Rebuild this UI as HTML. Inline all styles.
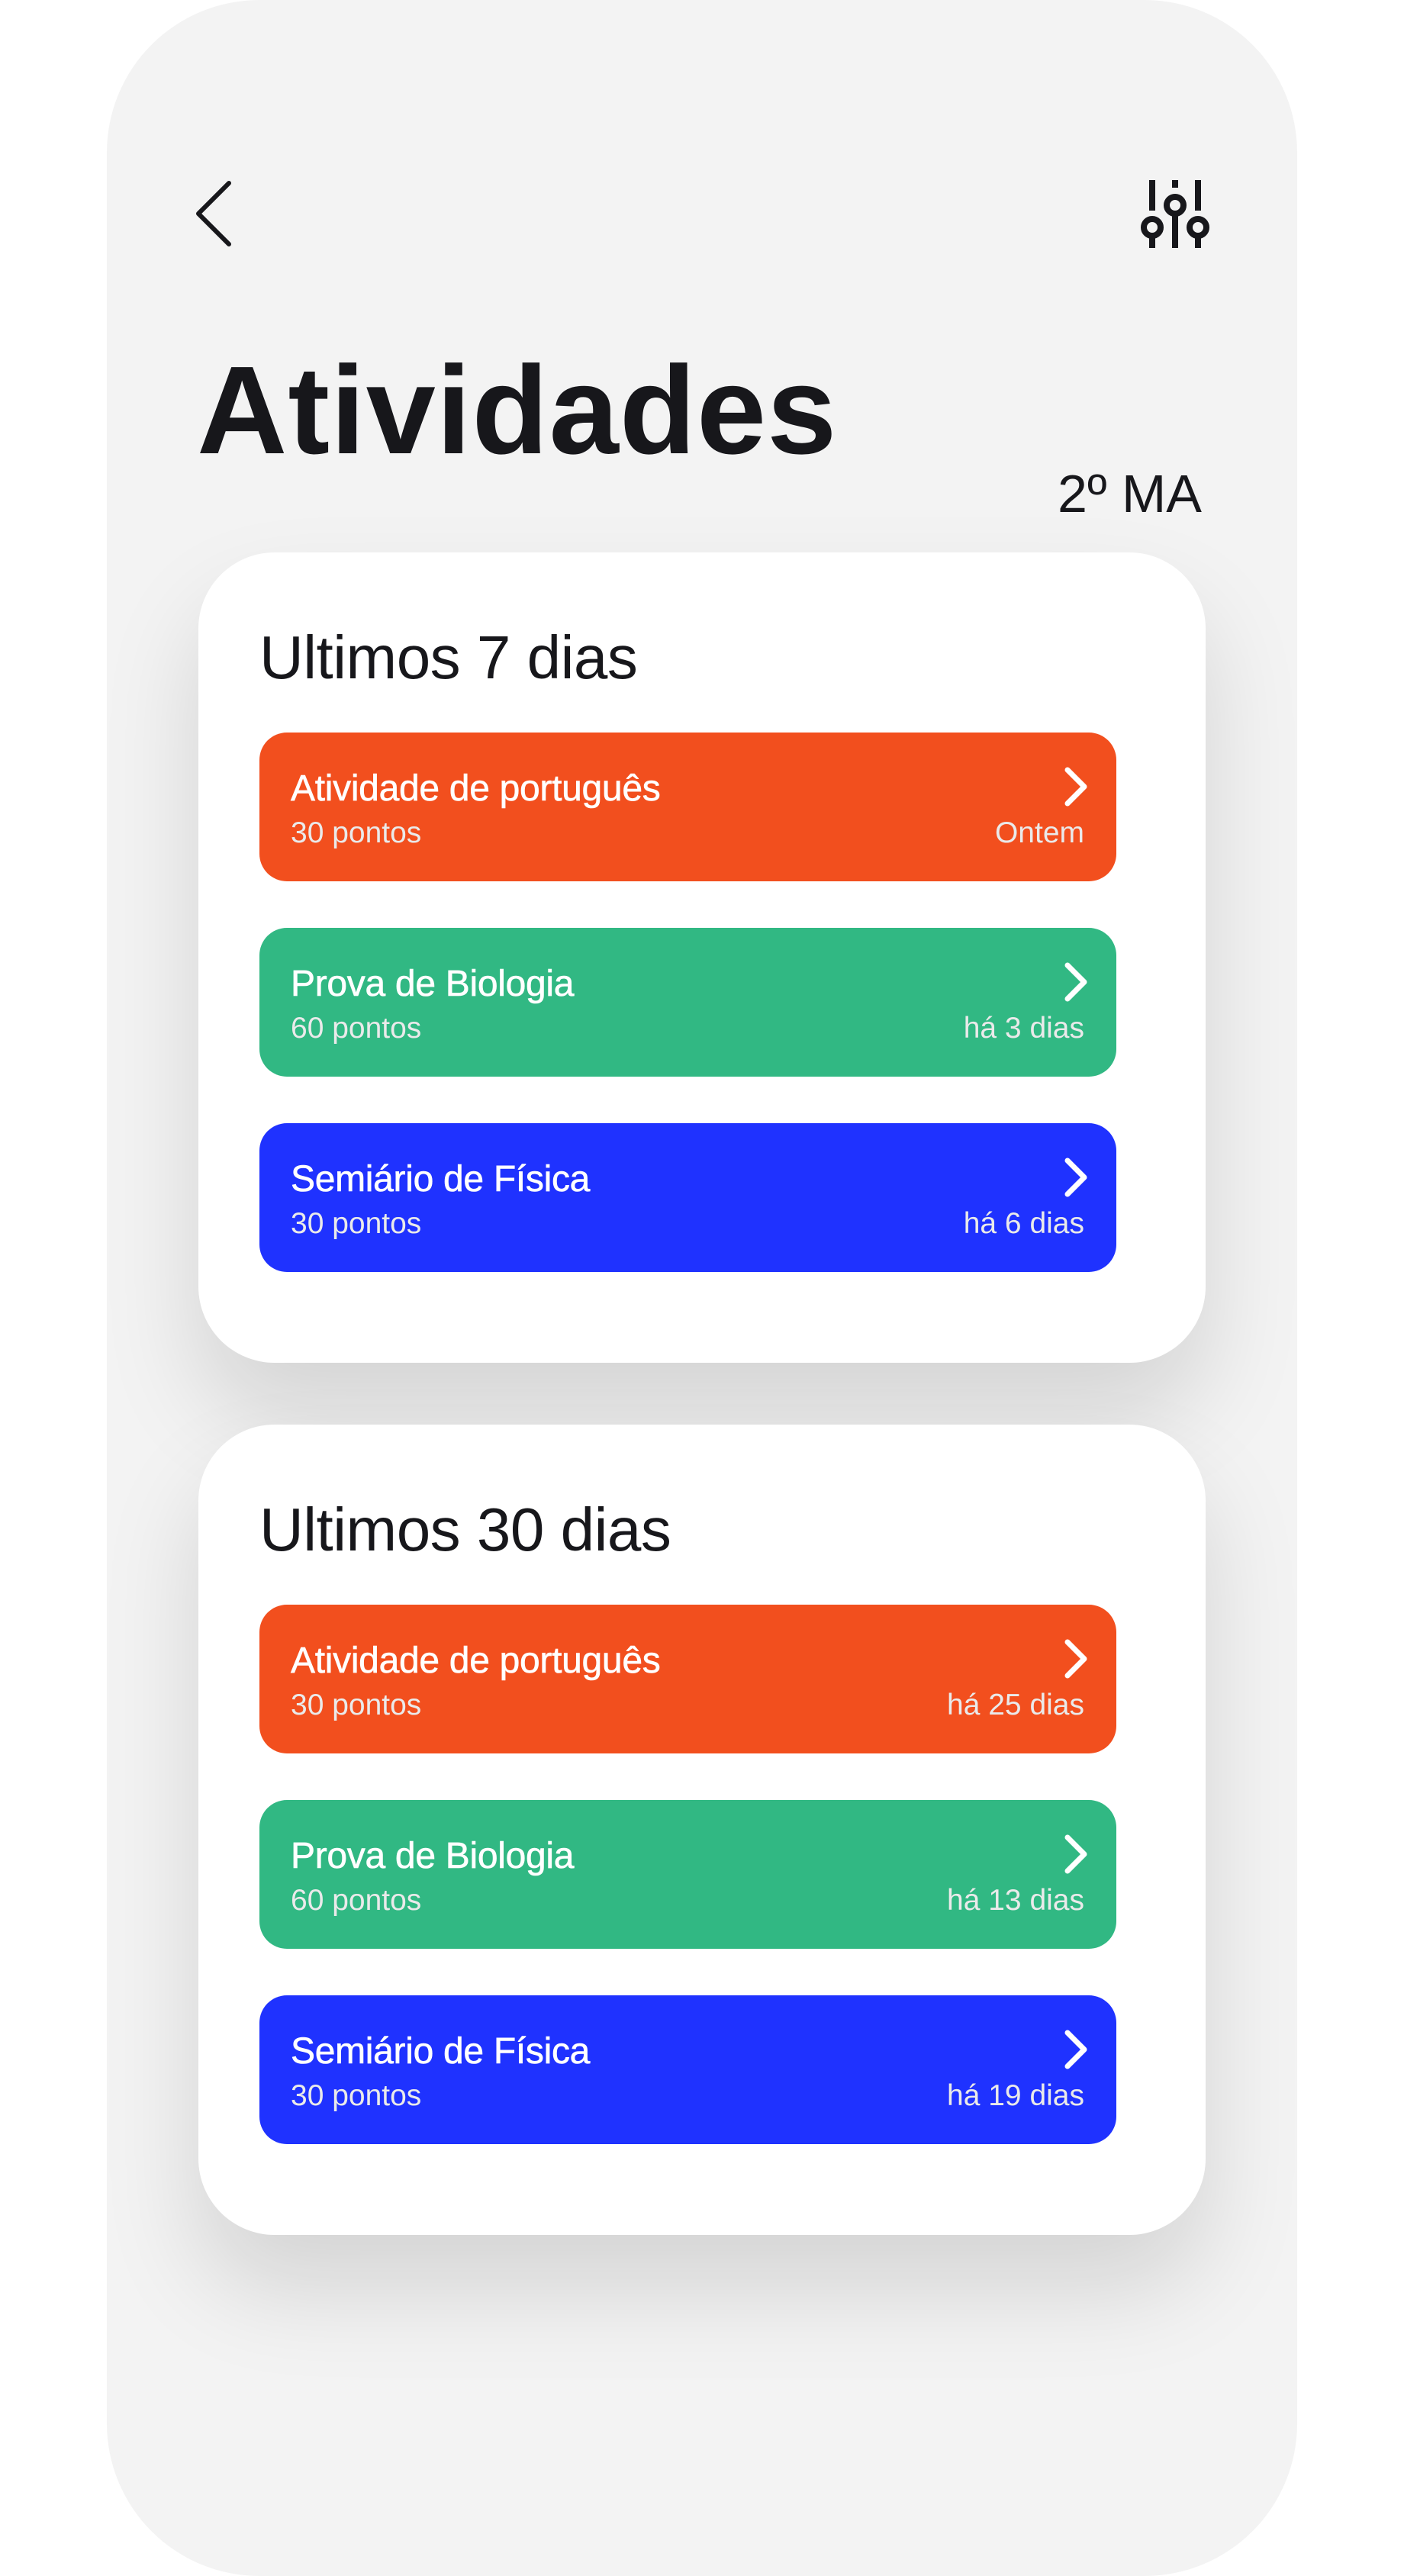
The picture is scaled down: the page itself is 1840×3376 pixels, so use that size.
<!DOCTYPE html>
<html><head><meta charset="utf-8"><style>
*{margin:0;padding:0;box-sizing:border-box}
body{width:1840px;height:3376px;background:#fff;position:relative;overflow:hidden;font-family:"Liberation Sans",Arial,sans-serif;color:#17171B}
.phone{position:absolute;left:140px;top:0;width:1560px;height:3376px;background:#F3F3F3;border-radius:200px}
.card{position:absolute;left:260px;width:1320px;height:1062px;background:#fff;border-radius:100px;box-shadow:0 70px 160px rgba(0,0,0,0.13)}
.card h2{position:absolute;left:80px;top:98px;font-size:80px;font-weight:400;line-height:1;letter-spacing:-0.5px}
.row{position:absolute;left:80px;width:1123px;height:195px;border-radius:36px;color:#fff}
.row .t{position:absolute;left:41px;top:50px;font-size:48px;line-height:1;letter-spacing:-0.3px;-webkit-text-stroke:0.6px #fff}
.row .s{position:absolute;left:41px;top:112px;font-size:39px;line-height:1;color:#eaeaea}
.row .r{position:absolute;right:42px;top:112px;font-size:39px;line-height:1;color:#eaeaea}
.row svg{position:absolute;left:1053px;top:43px}
.o{background:#F24F1E}.g{background:#31B883}.b{background:#1F32FF}
</style></head><body>
<div class="phone"></div>
<svg style="position:absolute;left:250px;top:232px" width="60" height="96" viewBox="0 0 60 96"><path d="M50 8 L10 48 L50 88" fill="none" stroke="#17171B" stroke-width="6" stroke-linecap="round" stroke-linejoin="round"/></svg>
<svg style="position:absolute;left:1490px;top:230px" width="100" height="100" viewBox="0 0 100 100"><g fill="none" stroke="#17171B" stroke-width="8"><line x1="20" y1="6" x2="20" y2="46"/><circle cx="20" cy="68" r="11"/><line x1="20" y1="79" x2="20" y2="95"/><line x1="50" y1="6" x2="50" y2="16"/><circle cx="50" cy="39" r="11"/><line x1="50" y1="50" x2="50" y2="95"/><line x1="80" y1="6" x2="80" y2="46"/><circle cx="80" cy="68" r="11"/><line x1="80" y1="79" x2="80" y2="95"/></g></svg>
<div style="position:absolute;left:258px;top:456px;font-size:164px;font-weight:700;line-height:1;letter-spacing:1px">Atividades</div>
<div style="position:absolute;right:265px;top:612px;font-size:70px;line-height:1">2º MA</div>

<div class="card" style="top:724px">
<h2>Ultimos 7 dias</h2>
<div class="row o" style="top:236px"><div class="t">Atividade de português</div><div class="s">30 pontos</div><div class="r">Ontem</div><svg width="34" height="56" viewBox="0 0 34 56"><path d="M6 6 L28 28 L6 50" fill="none" stroke="#fff" stroke-width="7" stroke-linecap="round" stroke-linejoin="round"/></svg></div>
<div class="row g" style="top:492px"><div class="t">Prova de Biologia</div><div class="s">60 pontos</div><div class="r">há 3 dias</div><svg width="34" height="56" viewBox="0 0 34 56"><path d="M6 6 L28 28 L6 50" fill="none" stroke="#fff" stroke-width="7" stroke-linecap="round" stroke-linejoin="round"/></svg></div>
<div class="row b" style="top:748px"><div class="t">Semiário de Física</div><div class="s">30 pontos</div><div class="r">há 6 dias</div><svg width="34" height="56" viewBox="0 0 34 56"><path d="M6 6 L28 28 L6 50" fill="none" stroke="#fff" stroke-width="7" stroke-linecap="round" stroke-linejoin="round"/></svg></div>
</div>

<div class="card" style="top:1867px">
<h2>Ultimos 30 dias</h2>
<div class="row o" style="top:236px"><div class="t">Atividade de português</div><div class="s">30 pontos</div><div class="r">há 25 dias</div><svg width="34" height="56" viewBox="0 0 34 56"><path d="M6 6 L28 28 L6 50" fill="none" stroke="#fff" stroke-width="7" stroke-linecap="round" stroke-linejoin="round"/></svg></div>
<div class="row g" style="top:492px"><div class="t">Prova de Biologia</div><div class="s">60 pontos</div><div class="r">há 13 dias</div><svg width="34" height="56" viewBox="0 0 34 56"><path d="M6 6 L28 28 L6 50" fill="none" stroke="#fff" stroke-width="7" stroke-linecap="round" stroke-linejoin="round"/></svg></div>
<div class="row b" style="top:748px"><div class="t">Semiário de Física</div><div class="s">30 pontos</div><div class="r">há 19 dias</div><svg width="34" height="56" viewBox="0 0 34 56"><path d="M6 6 L28 28 L6 50" fill="none" stroke="#fff" stroke-width="7" stroke-linecap="round" stroke-linejoin="round"/></svg></div>
</div>
</body></html>
